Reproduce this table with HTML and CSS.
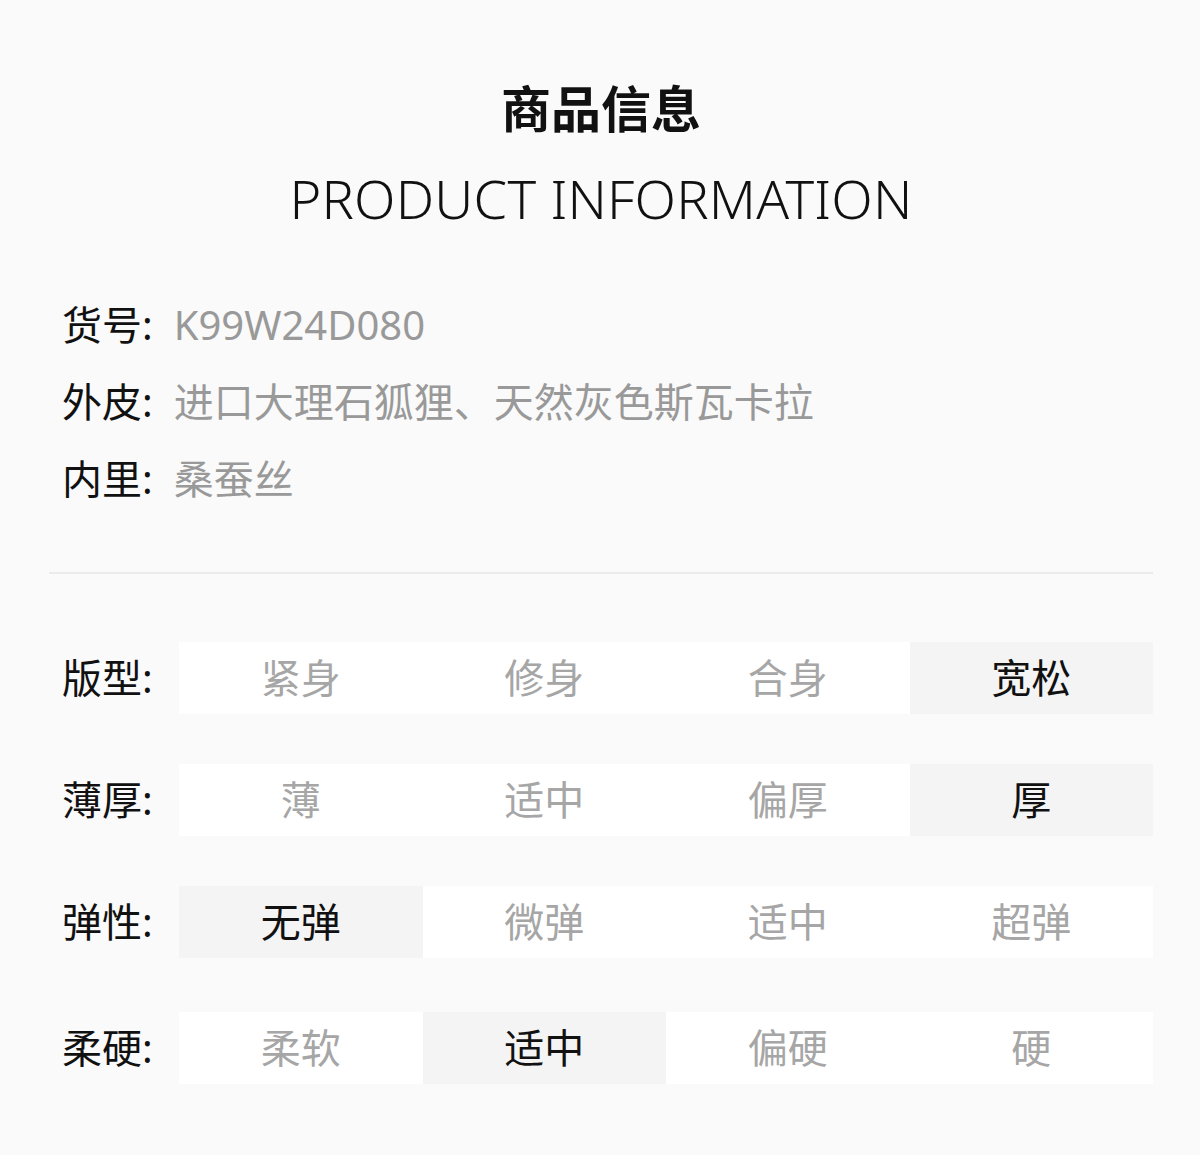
FILE: index.html
```html
<!DOCTYPE html>
<html lang="zh-CN">
<head>
    <meta charset="UTF-8">
    <meta name="viewport" content="width=device-width, initial-scale=1.0">
    <title>商品信息</title>
    <link rel="stylesheet" href="styles.css">
</head>
<body>
    <div class="page">
        <div class="heading">
            <h1>商品信息</h1>
            <h2>PRODUCT INFORMATION</h2>
        </div>

        <div class="info">
            <div class="info-row"><span class="info-label">货号:</span><span class="info-value">K99W24D080</span></div>
            <div class="info-row"><span class="info-label">外皮:</span><span class="info-value">进口大理石狐狸、天然灰色斯瓦卡拉</span></div>
            <div class="info-row"><span class="info-label">内里:</span><span class="info-value">桑蚕丝</span></div>
        </div>

        <div class="divider"></div>

        <div class="specs">
            <div class="spec-row">
                <div class="spec-label">版型:</div>
                <div class="spec-options">
                    <div class="option">紧身</div>
                    <div class="option">修身</div>
                    <div class="option">合身</div>
                    <div class="option active">宽松</div>
                </div>
            </div>
            <div class="spec-row">
                <div class="spec-label">薄厚:</div>
                <div class="spec-options">
                    <div class="option">薄</div>
                    <div class="option">适中</div>
                    <div class="option">偏厚</div>
                    <div class="option active">厚</div>
                </div>
            </div>
            <div class="spec-row">
                <div class="spec-label">弹性:</div>
                <div class="spec-options">
                    <div class="option active">无弹</div>
                    <div class="option">微弹</div>
                    <div class="option">适中</div>
                    <div class="option">超弹</div>
                </div>
            </div>
            <div class="spec-row">
                <div class="spec-label">柔硬:</div>
                <div class="spec-options">
                    <div class="option">柔软</div>
                    <div class="option active">适中</div>
                    <div class="option">偏硬</div>
                    <div class="option">硬</div>
                </div>
            </div>
        </div>
    </div>
</body>
</html>
```

FILE: styles.css
```css
:root {
    --background-color: #fafafa;
    --cell-background: #ffffff;
    --cell-active: #f4f4f4;
    --text-primary: #111111;
    --text-secondary: #999999;
    --text-muted: #a6a6a6;
    --border-color: #ebebeb;
}

* {
    margin: 0;
    padding: 0;
    box-sizing: border-box;
}

body {
    font-family: "Noto Sans", "Noto Sans CJK SC", sans-serif;
    background-color: var(--background-color);
    color: var(--text-primary);
}

.page {
    padding: 79px 47px 71px 49px;
}

.heading {
    text-align: center;
}

.heading h1 {
    font-size: 50px;
    font-weight: 700;
    line-height: 60px;
}

.heading h2 {
    margin-top: 29px;
    font-size: 54px;
    font-weight: 300;
    line-height: 60px;
    letter-spacing: 0.2px;
}

.info {
    margin-top: 58px;
    padding-left: 13px;
}

.info-row {
    font-size: 40px;
    line-height: 77px;
}

.info-label {
    margin-right: 21px;
}

.info-value {
    color: var(--text-secondary);
}

.divider {
    margin-top: 55px;
    height: 2px;
    background-color: var(--border-color);
}

.specs {
    margin-top: 68px;
    display: flex;
    flex-direction: column;
    gap: 50px;
}

.spec-row {
    display: flex;
    align-items: center;
}

.spec-row:last-child {
    margin-top: 4px;
}

.spec-label {
    width: 130px;
    padding-left: 13px;
    padding-bottom: 4px;
    font-size: 40px;
}

.spec-options {
    flex: 1;
    display: grid;
    grid-template-columns: repeat(4, 1fr);
    height: 72px;
}

.option {
    display: flex;
    align-items: center;
    justify-content: center;
    padding-bottom: 4px;
    background-color: var(--cell-background);
    color: var(--text-muted);
    font-size: 40px;
}

.option.active {
    background-color: var(--cell-active);
    color: var(--text-primary);
}
```
